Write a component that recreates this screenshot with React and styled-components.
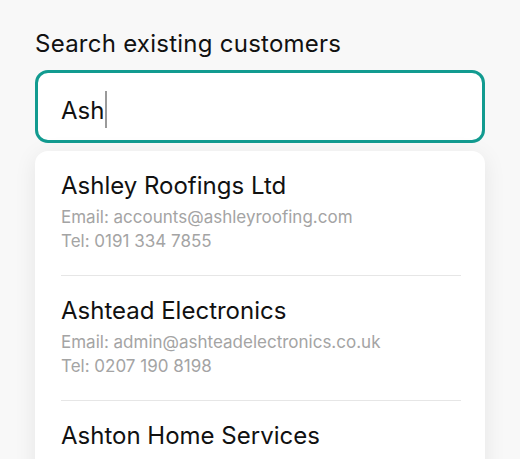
import React from 'react';
import styled, { createGlobalStyle } from 'styled-components';

const GlobalStyle = createGlobalStyle`
    html, body {
        margin: 0;
        padding: 0;
        overflow: hidden;
        background: #f8f8f8;
        font-family: Inter, "Noto Sans", sans-serif;
    }
`;

const Page = styled.div`
    padding: 29px 35px 0;
    display: flex;
    flex-direction: column;
`;

const Label = styled.label`
    font-size: 24px;
    line-height: 29px;
    letter-spacing: 0.25px;
    color: #111;
    margin-bottom: 12px;
`;

const SearchBox = styled.div`
    box-sizing: border-box;
    height: 73px;
    border: 3px solid #129b90;
    border-radius: 13px;
    background: #fff;
    display: flex;
    align-items: center;
    padding: 8px 23px 0;
    font-size: 24px;
    color: #111;
`;

const Caret = styled.span`
    display: inline-block;
    width: 1.5px;
    height: 37px;
    margin-left: 1px;
    margin-top: -2px;
    background: #9a9a9a;
`;

const Dropdown = styled.ul`
    list-style: none;
    margin: 8px 0 0;
    padding: 0 24px 0 26px;
    background: #fff;
    border-radius: 13px;
    box-shadow: 0 4px 22px rgba(0, 0, 0, 0.08);
`;

const Item = styled.li`
    padding: 20px 0 22px;
    border-bottom: 1px solid #e6e6e6;
`;

const Name = styled.div`
    font-size: 24px;
    line-height: 30px;
    color: #111;
    margin-bottom: 4px;
`;

const Detail = styled.div`
    font-size: 17px;
    line-height: 24px;
    color: #a4a4a4;
`;

const customers = [
    { name: 'Ashley Roofings Ltd', email: 'accounts@ashleyroofing.com', tel: '0191 334 7855' },
    { name: 'Ashtead Electronics', email: 'admin@ashteadelectronics.co.uk', tel: '0207 190 8198' },
    { name: 'Ashton Home Services', email: 'hello@ashtonhomeservices.co.uk', tel: '0161 442 3390' },
];

const App = () => (
    <Page>
        <GlobalStyle />
        <Label>Search existing customers</Label>
        <SearchBox>
            Ash<Caret />
        </SearchBox>
        <Dropdown>
            {customers.map(c => (
                <Item key={c.name}>
                    <Name>{c.name}</Name>
                    <Detail>Email: {c.email}</Detail>
                    <Detail>Tel: {c.tel}</Detail>
                </Item>
            ))}
        </Dropdown>
    </Page>
);

export default App;
